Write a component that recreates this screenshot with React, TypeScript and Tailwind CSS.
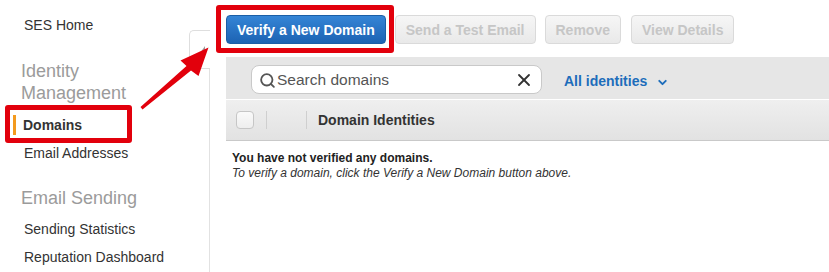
import { Search, X, ChevronDown } from 'lucide-react';

const SIDE_LINKS_TOP = ['SES Home'];

function DisabledButton({ label }: { label: string }) {
  return (
    <button
      disabled
      className="h-[29px] px-[10px] rounded-[4px] border border-[#dadada] bg-gradient-to-b from-[#f6f6f6] to-[#e9e9e9] text-[14px] font-bold text-[#c6c6c6] leading-none"
    >
      {label}
    </button>
  );
}

export default function App() {
  return (
    <div
      className="relative w-[829px] h-[272px] overflow-hidden bg-white flex"
      style={{ fontFamily: '"Liberation Sans", Arial, sans-serif' }}
    >
      {/* sidebar */}
      <aside className="w-[209px] shrink-0 pt-[11px] text-[14px] text-[#333]">
        {SIDE_LINKS_TOP.map((l) => (
          <div key={l} className="h-[28px] flex items-center pl-[24px]">{l}</div>
        ))}
        <div className="mt-[21px] pl-[21px] text-[18px] leading-[22px] text-[#9b9b9b]">
          Identity
          <br />
          Management
        </div>
        <div className="mt-[7px] h-[28px] flex items-center relative pl-[23px] font-bold text-[#333]">
          <span className="absolute left-[13px] top-[4px] h-[20px] w-[3px] bg-[#f39a1e]" />
          Domains
        </div>
        <div className="h-[28px] flex items-center pl-[24px]">Email Addresses</div>
        <div className="mt-[20px] pl-[21px] text-[18px] leading-[22px] text-[#9b9b9b]">Email Sending</div>
        <div className="mt-[6px] h-[28px] flex items-center pl-[24px]">Sending Statistics</div>
        <div className="h-[28px] flex items-center pl-[24px]">Reputation Dashboard</div>
      </aside>

      {/* divider with collapse handle */}
      <div className="relative w-px shrink-0 mt-[30px] bg-[#e2e2e2]">
        <div className="absolute right-0 top-0 w-[21px] h-[39px] border border-r-0 border-[#dedede] rounded-l-[5px] bg-white">
          <svg width="9" height="11" viewBox="0 0 9 11" className="absolute left-[7px] top-[15px]">
            <polygon points="8,0 8,10 1,10" fill="#9a9a9a" />
          </svg>
        </div>
      </div>

      {/* main */}
      <main className="flex-1 min-w-0 pl-[16px] pt-[15px]">
        <div className="flex gap-[9px]">
          <button className="h-[29px] px-[10px] rounded-[4px] border border-[#1b5ea6] bg-gradient-to-b from-[#3585d6] to-[#1c63b3] text-[14px] font-bold text-white leading-none">
            Verify a New Domain
          </button>
          <DisabledButton label="Send a Test Email" />
          <DisabledButton label="Remove" />
          <div className="ml-px">
            <DisabledButton label="View Details" />
          </div>
        </div>

        <div className="mt-[13px] h-[42px] bg-[#e6e6e6] flex items-start pt-[8px] pl-[25px]">
          <div className="w-[291px] h-[29px] rounded-[8px] border border-[#c9c9c9] bg-white flex items-center pl-[7px] pr-[7px] pt-[1px]">
            <Search size={17} strokeWidth={2.6} className="text-[#555] shrink-0" />
            <span className="ml-[1px] text-[15.5px] text-[#555] flex-1">Search domains</span>
            <X size={20} strokeWidth={2.2} className="text-[#333]" />
          </div>
          <div className="ml-[22px] mt-[6px] flex items-center text-[14px] font-bold text-[#1d6dbb]">
            All identities
            <ChevronDown size={13} strokeWidth={3.5} className="ml-[9px] mt-[1px]" />
          </div>
        </div>

        <div className="h-[42px] border-t border-white border-b border-b-[#c9c9c9] bg-gradient-to-b from-[#efefef] to-[#e2e2e2] flex items-center pl-[10px]">
          <div className="w-[18px] h-[18px] rounded-[4px] border border-[#c6c6c6] bg-gradient-to-b from-[#fafafa] to-[#eeeeee]" />
          <div className="ml-[12px] w-px h-[18px] bg-[#cfcfcf]" />
          <div className="ml-[39px] w-px h-[18px] bg-[#cfcfcf]" />
          <span className="ml-[11px] text-[14px] font-bold text-[#333]">Domain Identities</span>
        </div>

        <div className="pt-[10px] pl-[6px] text-[12px] leading-[15px]">
          <div className="font-bold text-[#222]">You have not verified any domains.</div>
          <div className="italic text-[#333]">To verify a domain, click the Verify a New Domain button above.</div>
        </div>
      </main>

      {/* annotations */}
      <div className="absolute left-[5px] top-[105px] w-[127px] h-[38px] border-[5px] border-[#e2000c] rounded-[3px] pointer-events-none" />
      <div className="absolute left-[216px] top-[5px] w-[178px] h-[48px] border-[5px] border-[#e2000c] rounded-[3px] pointer-events-none" />
      <svg className="absolute left-0 top-0 pointer-events-none" width="829" height="272">
        <polygon
          points="140.5,107 186.5,66 180.5,60.5 208.5,47.5 198.5,76 191,70.5 142.5,109.5"
          fill="#e2000c"
        />
      </svg>
    </div>
  );
}
